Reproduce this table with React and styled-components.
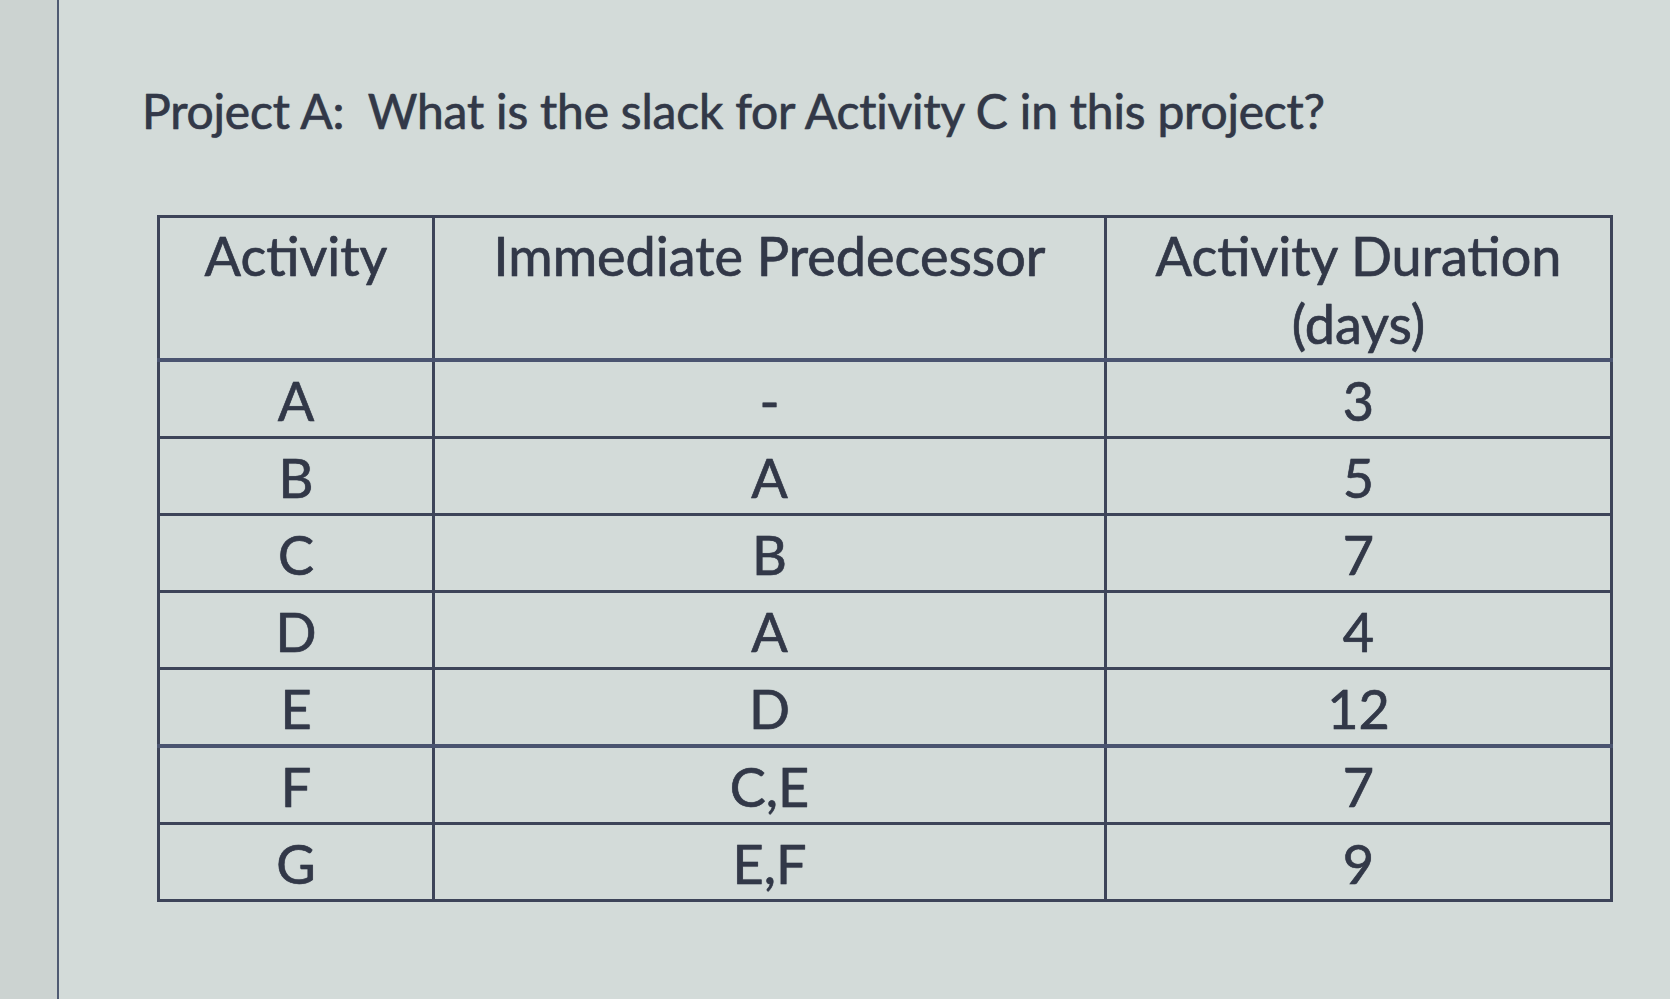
import React from "react";
import styled, { createGlobalStyle } from "styled-components";

const GlobalStyle = createGlobalStyle`
  html, body {
    margin: 0;
    padding: 0;
    background: #cfd6d4;
  }
  body {
    font-family: Lato, "Open Sans", "Liberation Sans", sans-serif;
    color: #323848;
  }
`;

const Page = styled.div`
  height: 999px;
  width: 1670px;
  overflow: hidden;
  background: #cfd6d4;
  display: flex;
`;

const Gutter = styled.div`
  width: 57px;
  flex: none;
  background: #ccd3d1;
  border-right: 2px solid #4f5a72;
`;

const Sheet = styled.div`
  flex: 1;
  background: #d3dbd9;
  padding: 82px 0 0 83px;
`;

const Title = styled.h1`
  margin: 0;
  font-size: 48px;
  line-height: 1.2;
  font-weight: 400;
  letter-spacing: -0.2px;
  -webkit-text-stroke: 0.5px #323848;
  text-shadow: 0 0 1px rgba(40, 45, 60, 0.6);
`;

const Table = styled.table`
  margin: 75px 0 0 15px;
  border-collapse: collapse;
  width: 1453px;
  table-layout: fixed;
  font-size: 54px;
  -webkit-text-stroke: 0.6px #323848;
  text-shadow: 0 0 1px rgba(40, 45, 60, 0.6);
`;

const Cell = styled.td`
  border: 3px solid #3d4459;
  border-bottom-width: ${props => (props.$thick ? "4px" : "3px")};
  border-bottom-color: ${props => (props.$thick ? "#4a5470" : "#3d4459")};
  text-align: center;
  vertical-align: middle;
  height: 70px;
  padding: 4px 0 0;
  line-height: 1;
`;

const HeadCell = styled.th`
  border: 3px solid #3d4459;
  border-bottom: 4px solid #4a5470;
  text-align: center;
  vertical-align: top;
  font-weight: 400;
  padding: 4px 0 0;
  line-height: 68px;
`;

const rows = [
  ["A", "-", "3"],
  ["B", "A", "5"],
  ["C", "B", "7"],
  ["D", "A", "4"],
  ["E", "D", "12"],
  ["F", "C,E", "7"],
  ["G", "E,F", "9"],
];

export default function App() {
  return (
    <>
      <GlobalStyle />
      <Page>
        <Gutter />
        <Sheet>
          <Title>Project A:&nbsp; What is the slack for Activity C in this project?</Title>
          <Table>
            <colgroup>
              <col style={{ width: 275 }} />
              <col style={{ width: 672 }} />
              <col style={{ width: 506 }} />
            </colgroup>
            <thead>
              <tr>
                <HeadCell>Activity</HeadCell>
                <HeadCell>Immediate Predecessor</HeadCell>
                <HeadCell>
                  Activity Duration
                  <br />
                  (days)
                </HeadCell>
              </tr>
            </thead>
            <tbody>
              {rows.map((r, i) => (
                <tr key={r[0]}>
                  {r.map((v, j) => (
                    <Cell key={j} $thick={i === 4}>
                      {v}
                    </Cell>
                  ))}
                </tr>
              ))}
            </tbody>
          </Table>
        </Sheet>
      </Page>
    </>
  );
}
